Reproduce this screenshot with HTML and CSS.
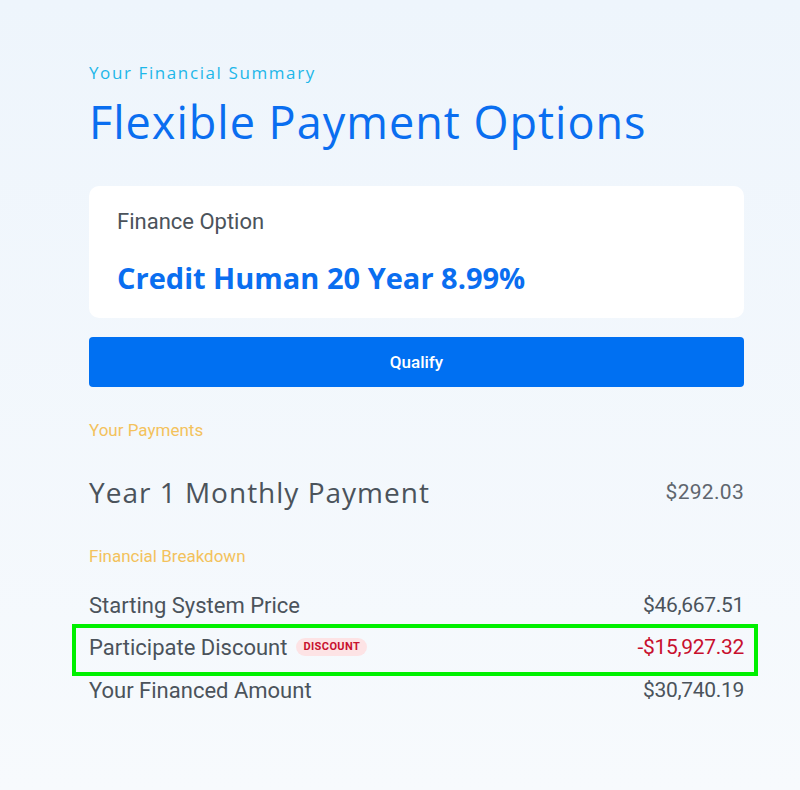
FILE: index.html
```html
<!DOCTYPE html>
<html lang="en">
<head>
  <meta charset="UTF-8" />
  <meta name="viewport" content="width=device-width, initial-scale=1.0"/>
  <title>Flexible Payment Options</title>
  <link rel="stylesheet" href="styles.css">
</head>
<body>
  <main class="summary">
    <p class="eyebrow">Your Financial Summary</p>
    <h1 class="title">Flexible Payment Options</h1>

    <div class="finance-card">
      <div class="finance-label">Finance Option</div>
      <div class="finance-name">Credit Human 20 Year 8.99%</div>
    </div>

    <button class="qualify-btn" type="button">Qualify</button>

    <h3 class="section-label">Your Payments</h3>
    <div class="payment-row">
      <span class="payment-name">Year 1 Monthly Payment</span>
      <span class="payment-value">$292.03</span>
    </div>

    <h3 class="section-label breakdown-label">Financial Breakdown</h3>
    <div class="breakdown">
      <div class="line">
        <span>Starting System Price</span>
        <span class="amount">$46,667.51</span>
      </div>
      <div class="line line-highlight">
        <span class="line-name">Participate Discount <span class="badge">Discount</span></span>
        <span class="amount negative">-$15,927.32</span>
      </div>
      <div class="line">
        <span>Your Financed Amount</span>
        <span class="amount">$30,740.19</span>
      </div>
    </div>
  </main>
</body>
</html>
```

FILE: styles.css
```css
:root {
  --blue: #0a6ef0;
  --cyan: #1db7e9;
  --gold: #f3c25c;
  --text: #4b535b;
  --text-light: #5f666e;
  --red: #c8102e;
}

* {
  box-sizing: border-box;
  margin: 0;
  padding: 0;
}

body {
  background: linear-gradient(180deg, #eef5fc 0%, #f7fafd 100%);
  min-height: 100vh;
  font-family: Roboto, 'Liberation Sans', sans-serif;
  color: var(--text);
}

.summary {
  padding: 62px 56px 40px 89px;
}

.eyebrow {
  font-family: 'Open Sans', sans-serif;
  font-size: 17px;
  letter-spacing: 1.6px;
  color: var(--cyan);
  line-height: 22px;
}

.title {
  font-family: 'Open Sans', sans-serif;
  font-weight: 400;
  font-size: 45px;
  line-height: 56px;
  color: var(--blue);
  margin-top: 10px;
  letter-spacing: 1px;
}

.finance-card {
  background: #ffffff;
  border-radius: 10px;
  margin-top: 36px;
  padding: 22px 28px 0;
  height: 132px;
}

.finance-label {
  font-size: 22px;
  line-height: 28px;
  color: var(--text);
}

.finance-name {
  font-family: 'Open Sans', sans-serif;
  font-weight: 700;
  font-size: 29px;
  line-height: 36px;
  color: var(--blue);
  margin-top: 24px;
}

.qualify-btn {
  display: block;
  width: 100%;
  height: 50px;
  margin-top: 19px;
  background: #0070f2;
  color: #ffffff;
  border: none;
  border-radius: 4px;
  font-family: Roboto, sans-serif;
  font-size: 17px;
  font-weight: 500;
  cursor: pointer;
}

.section-label {
  font-weight: 400;
  font-size: 17px;
  line-height: 22px;
  color: var(--gold);
  margin-top: 32px;
}

.payment-row {
  display: flex;
  justify-content: space-between;
  align-items: center;
  height: 36px;
  margin-top: 33px;
}

.payment-name {
  font-family: 'Open Sans', sans-serif;
  font-size: 28px;
  line-height: 36px;
  letter-spacing: 1px;
  color: var(--text);
}

.payment-value {
  font-size: 21px;
  letter-spacing: 0.3px;
  color: var(--text-light);
}

.breakdown-label {
  margin-top: 35px;
}

.breakdown {
  margin-top: 17px;
}

.line {
  display: flex;
  justify-content: space-between;
  align-items: center;
  font-size: 22px;
  height: 42px;
  color: var(--text);
}

.amount {
  font-size: 21px;
  letter-spacing: -0.3px;
}

.line-highlight {
  outline: 4px solid #00f000;
  margin: 2px -10px -3px -13px;
  padding: 0 10px 6px 13px;
  height: 44px;
}

.line-name {
  display: flex;
  align-items: center;
  gap: 9px;
}

.badge {
  background: #fde3e5;
  color: var(--red);
  font-size: 11px;
  font-weight: 700;
  letter-spacing: 0.4px;
  text-transform: uppercase;
  padding: 2px 7px;
  border-radius: 9px;
  line-height: 14px;
}

.negative {
  color: var(--red);
}
```
